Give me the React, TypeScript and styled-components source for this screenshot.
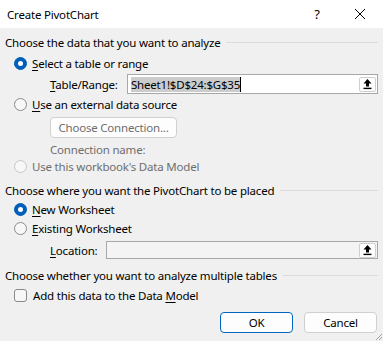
import React from "react";
import styled, { createGlobalStyle } from "styled-components";

const GlobalStyle = createGlobalStyle`
  html, body {
    margin: 0;
    padding: 0;
    background: #f0f0f0;
  }
  body {
    font-family: "Noto Sans", "Open Sans", sans-serif;
    font-size: 11.5px;
    letter-spacing: -0.2px;
    color: #1a1a1a;
  }
`;

const Window = styled.div`
  width: 383px;
  height: 341px;
  background: #f0f0f0;
  display: flex;
  flex-direction: column;
  position: relative;
  overflow: hidden;
`;

const TitleBar = styled.div`
  height: 28px;
  background: #ffffff;
  display: flex;
  align-items: center;
  padding-left: 7px;
  flex-shrink: 0;
`;

const Title = styled.div`
  flex: 1;
  color: #000;
`;

const TitleButton = styled.div<{ $w: number }>`
  width: ${(p) => p.$w}px;
  height: 28px;
  display: flex;
  align-items: center;
  justify-content: center;
  font-size: 13px;
  color: #000;
`;

const Body = styled.div`
  padding: 0 5px;
  display: flex;
  flex-direction: column;
`;

const SectionHeader = styled.div<{ $mt: number }>`
  display: flex;
  align-items: center;
  height: 16px;
  margin-top: ${(p) => p.$mt}px;
  gap: 6px;
  color: #000;
  &::after {
    content: "";
    flex: 1;
    height: 1px;
    background: #dcdcdc;
  }
`;

const Row = styled.div<{ $mt: number; $indent: number; $h?: number }>`
  display: flex;
  align-items: center;
  height: ${(p) => p.$h ?? 16}px;
  margin-top: ${(p) => p.$mt}px;
  padding-left: ${(p) => p.$indent}px;
`;

const Label = styled.span<{ $disabled?: boolean; $w?: number }>`
  color: ${(p) => (p.$disabled ? "#6e6e6e" : "#000")};
  width: ${(p) => (p.$w ? `${p.$w}px` : "auto")};
  flex-shrink: 0;
  white-space: nowrap;
`;

const Key = styled.span`
  text-decoration: underline;
  text-underline-offset: 2px;
`;

const Radio = styled.span<{ $checked?: boolean; $disabled?: boolean }>`
  width: 13px;
  height: 13px;
  box-sizing: border-box;
  border-radius: 50%;
  margin-right: 5px;
  flex-shrink: 0;
  display: flex;
  align-items: center;
  justify-content: center;
  background: ${(p) => (p.$checked ? "#005fb8" : "#f7f7f7")};
  border: 1px solid
    ${(p) => (p.$checked ? "#005fb8" : p.$disabled ? "#c6c6c6" : "#8a8a8a")};
  &::after {
    content: "";
    display: ${(p) => (p.$checked ? "block" : "none")};
    width: 5px;
    height: 5px;
    border-radius: 50%;
    background: #fff;
  }
`;

const Checkbox = styled.span`
  width: 13px;
  height: 13px;
  box-sizing: border-box;
  border-radius: 3px;
  border: 1px solid #8a8a8a;
  background: #f7f7f7;
  margin-right: 6px;
  flex-shrink: 0;
`;

const Field = styled.div<{ $disabled?: boolean; $h: number }>`
  flex: 1;
  height: ${(p) => p.$h}px;
  box-sizing: border-box;
  border: 1px solid #a8a8a8;
  background: ${(p) => (p.$disabled ? "#f4f4f4" : "#ffffff")};
  display: flex;
  align-items: center;
  padding-left: 3px;
  padding-right: 1px;
`;

const FieldText = styled.span`
  flex: 1;
  display: flex;
  align-items: center;
`;

const Selected = styled.span`
  background: #cccccc;
  color: #000;
  line-height: 15px;
  border-right: 1px solid #000;
`;

const PickButton = styled.div`
  width: 17px;
  height: 15px;
  box-sizing: border-box;
  border: 1px solid #cfcfcf;
  border-radius: 2px;
  background: #ffffff;
  display: flex;
  align-items: center;
  justify-content: center;
`;

const Button = styled.div<{ $primary?: boolean; $disabled?: boolean; $w: number }>`
  width: ${(p) => p.$w}px;
  height: 21px;
  box-sizing: border-box;
  border-radius: 4px;
  border: 1px solid ${(p) => (p.$primary ? "#0067c0" : "#d0d0d0")};
  background: #fdfdfd;
  color: ${(p) => (p.$disabled ? "#6e6e6e" : "#000")};
  display: flex;
  align-items: center;
  justify-content: center;
`;

const Footer = styled.div`
  display: flex;
  justify-content: flex-end;
  gap: 11px;
  margin-top: 9px;
  padding-right: 1px;
`;

const Grip = styled.svg`
  position: absolute;
  right: 0;
  bottom: 0;
`;

const UpArrow = () => (
  <svg width="11" height="12" viewBox="0 0 11 12">
    <path d="M5.5 1 L1.5 5.5 H4 V8.5 H7 V5.5 H9.5 Z" fill="#000" />
    <rect x="1.5" y="9.7" width="8" height="1.4" fill="#000" />
  </svg>
);

export default function App() {
  return (
    <Window>
      <GlobalStyle />
      <TitleBar>
        <Title>Create PivotChart</Title>
        <TitleButton $w={40}>?</TitleButton>
        <TitleButton $w={46}>
          <svg width="12" height="12" viewBox="0 0 12 12">
            <path d="M1 1 L11 11 M11 1 L1 11" stroke="#000" strokeWidth="1" />
          </svg>
        </TitleButton>
      </TitleBar>
      <Body>
        <SectionHeader $mt={6}>Choose the data that you want to analyze</SectionHeader>
        <Row $mt={5} $indent={9}>
          <Radio $checked />
          <Label>
            <Key>S</Key>elect a table or range
          </Label>
        </Row>
        <Row $mt={3} $indent={45} $h={20}>
          <Label $w={77}>
            <Key>T</Key>able/Range:
          </Label>
          <Field $h={20}>
            <FieldText>
              <Selected>Sheet1!$D$24:$G$35</Selected>
            </FieldText>
            <PickButton>
              <UpArrow />
            </PickButton>
          </Field>
        </Row>
        <Row $mt={2} $indent={9}>
          <Radio />
          <Label>
            <Key>U</Key>se an external data source
          </Label>
        </Row>
        <Row $mt={5} $indent={45} $h={20}>
          <Button $w={127} $disabled>
            Choose Connection...
          </Button>
        </Row>
        <Row $mt={4} $indent={45}>
          <Label $disabled>Connection name:</Label>
        </Row>
        <Row $mt={1} $indent={9}>
          <Radio $disabled />
          <Label $disabled>Use this workbook's Data Model</Label>
        </Row>
        <SectionHeader $mt={8}>Choose where you want the PivotChart to be placed</SectionHeader>
        <Row $mt={3} $indent={9}>
          <Radio $checked />
          <Label>
            <Key>N</Key>ew Worksheet
          </Label>
        </Row>
        <Row $mt={3} $indent={9}>
          <Radio />
          <Label>
            <Key>E</Key>xisting Worksheet
          </Label>
        </Row>
        <Row $mt={5} $indent={45} $h={18}>
          <Label $w={56}>
            <Key>L</Key>ocation:
          </Label>
          <Field $h={18} $disabled>
            <FieldText />
            <PickButton>
              <UpArrow />
            </PickButton>
          </Field>
        </Row>
        <SectionHeader $mt={8}>Choose whether you want to analyze multiple tables</SectionHeader>
        <Row $mt={4} $indent={9}>
          <Checkbox />
          <Label>
            Add this data to the Data <Key>M</Key>odel
          </Label>
        </Row>
        <Footer>
          <Button $w={73} $primary>
            OK
          </Button>
          <Button $w={73}>Cancel</Button>
        </Footer>
      </Body>
      <Grip width="10" height="10" viewBox="0 0 10 10">
        <path d="M9 3 L3 9 M9 6 L6 9" stroke="#a0a0a0" strokeWidth="1" />
      </Grip>
    </Window>
  );
}
